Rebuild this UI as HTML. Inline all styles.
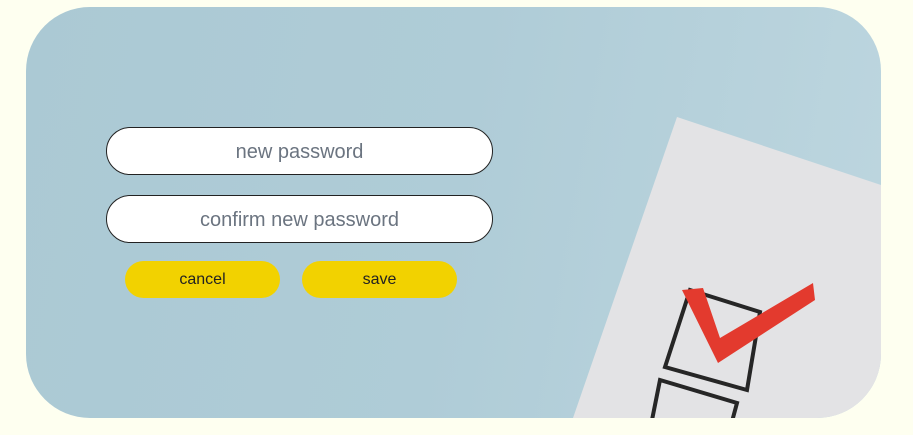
<!DOCTYPE html>
<html><head><meta charset="utf-8"><style>
html,body{margin:0;padding:0;width:913px;height:435px;background:#fefff0;overflow:hidden;font-family:"Liberation Sans",sans-serif}
.card{position:absolute;left:26px;top:7px;width:855px;height:411px;border-radius:64px;overflow:hidden;background:linear-gradient(100deg,#abc9d4 0%,#afccd7 50%,#bdd6df 100%)}
.inp{position:absolute;left:80px;width:385px;height:46px;background:#fff;border:1px solid #222;border-radius:24px;text-align:center;line-height:48px;font-size:20px;color:#6b7480}
.btn{position:absolute;top:261px;height:37px;width:155px;border-radius:19px;background:#f2d200;text-align:center;line-height:37px;font-size:16px;color:#222}
svg{position:absolute;left:0;top:0}
</style></head><body>
<div class="card">
<svg width="855" height="411" viewBox="26 7 855 411">
<polygon points="677,117 881,185 881,418 573,418" fill="#e3e3e5"/>
<polygon points="690,290 760,312 747,390 665,367" fill="none" stroke="#262626" stroke-width="4"/>
<polygon points="660,380 737,403 727,440 648,440" fill="none" stroke="#262626" stroke-width="4"/>
<polygon points="682,290 703,288 720,338 813,283 815,300 718,363" fill="#e33a2e"/>
</svg>
<div class="inp" style="top:120px">new password</div>
<div class="inp" style="top:188px">confirm new password</div>
<div class="btn" style="left:99px;top:254px">cancel</div>
<div class="btn" style="left:276px;top:254px">save</div>
</div>
</body></html>
